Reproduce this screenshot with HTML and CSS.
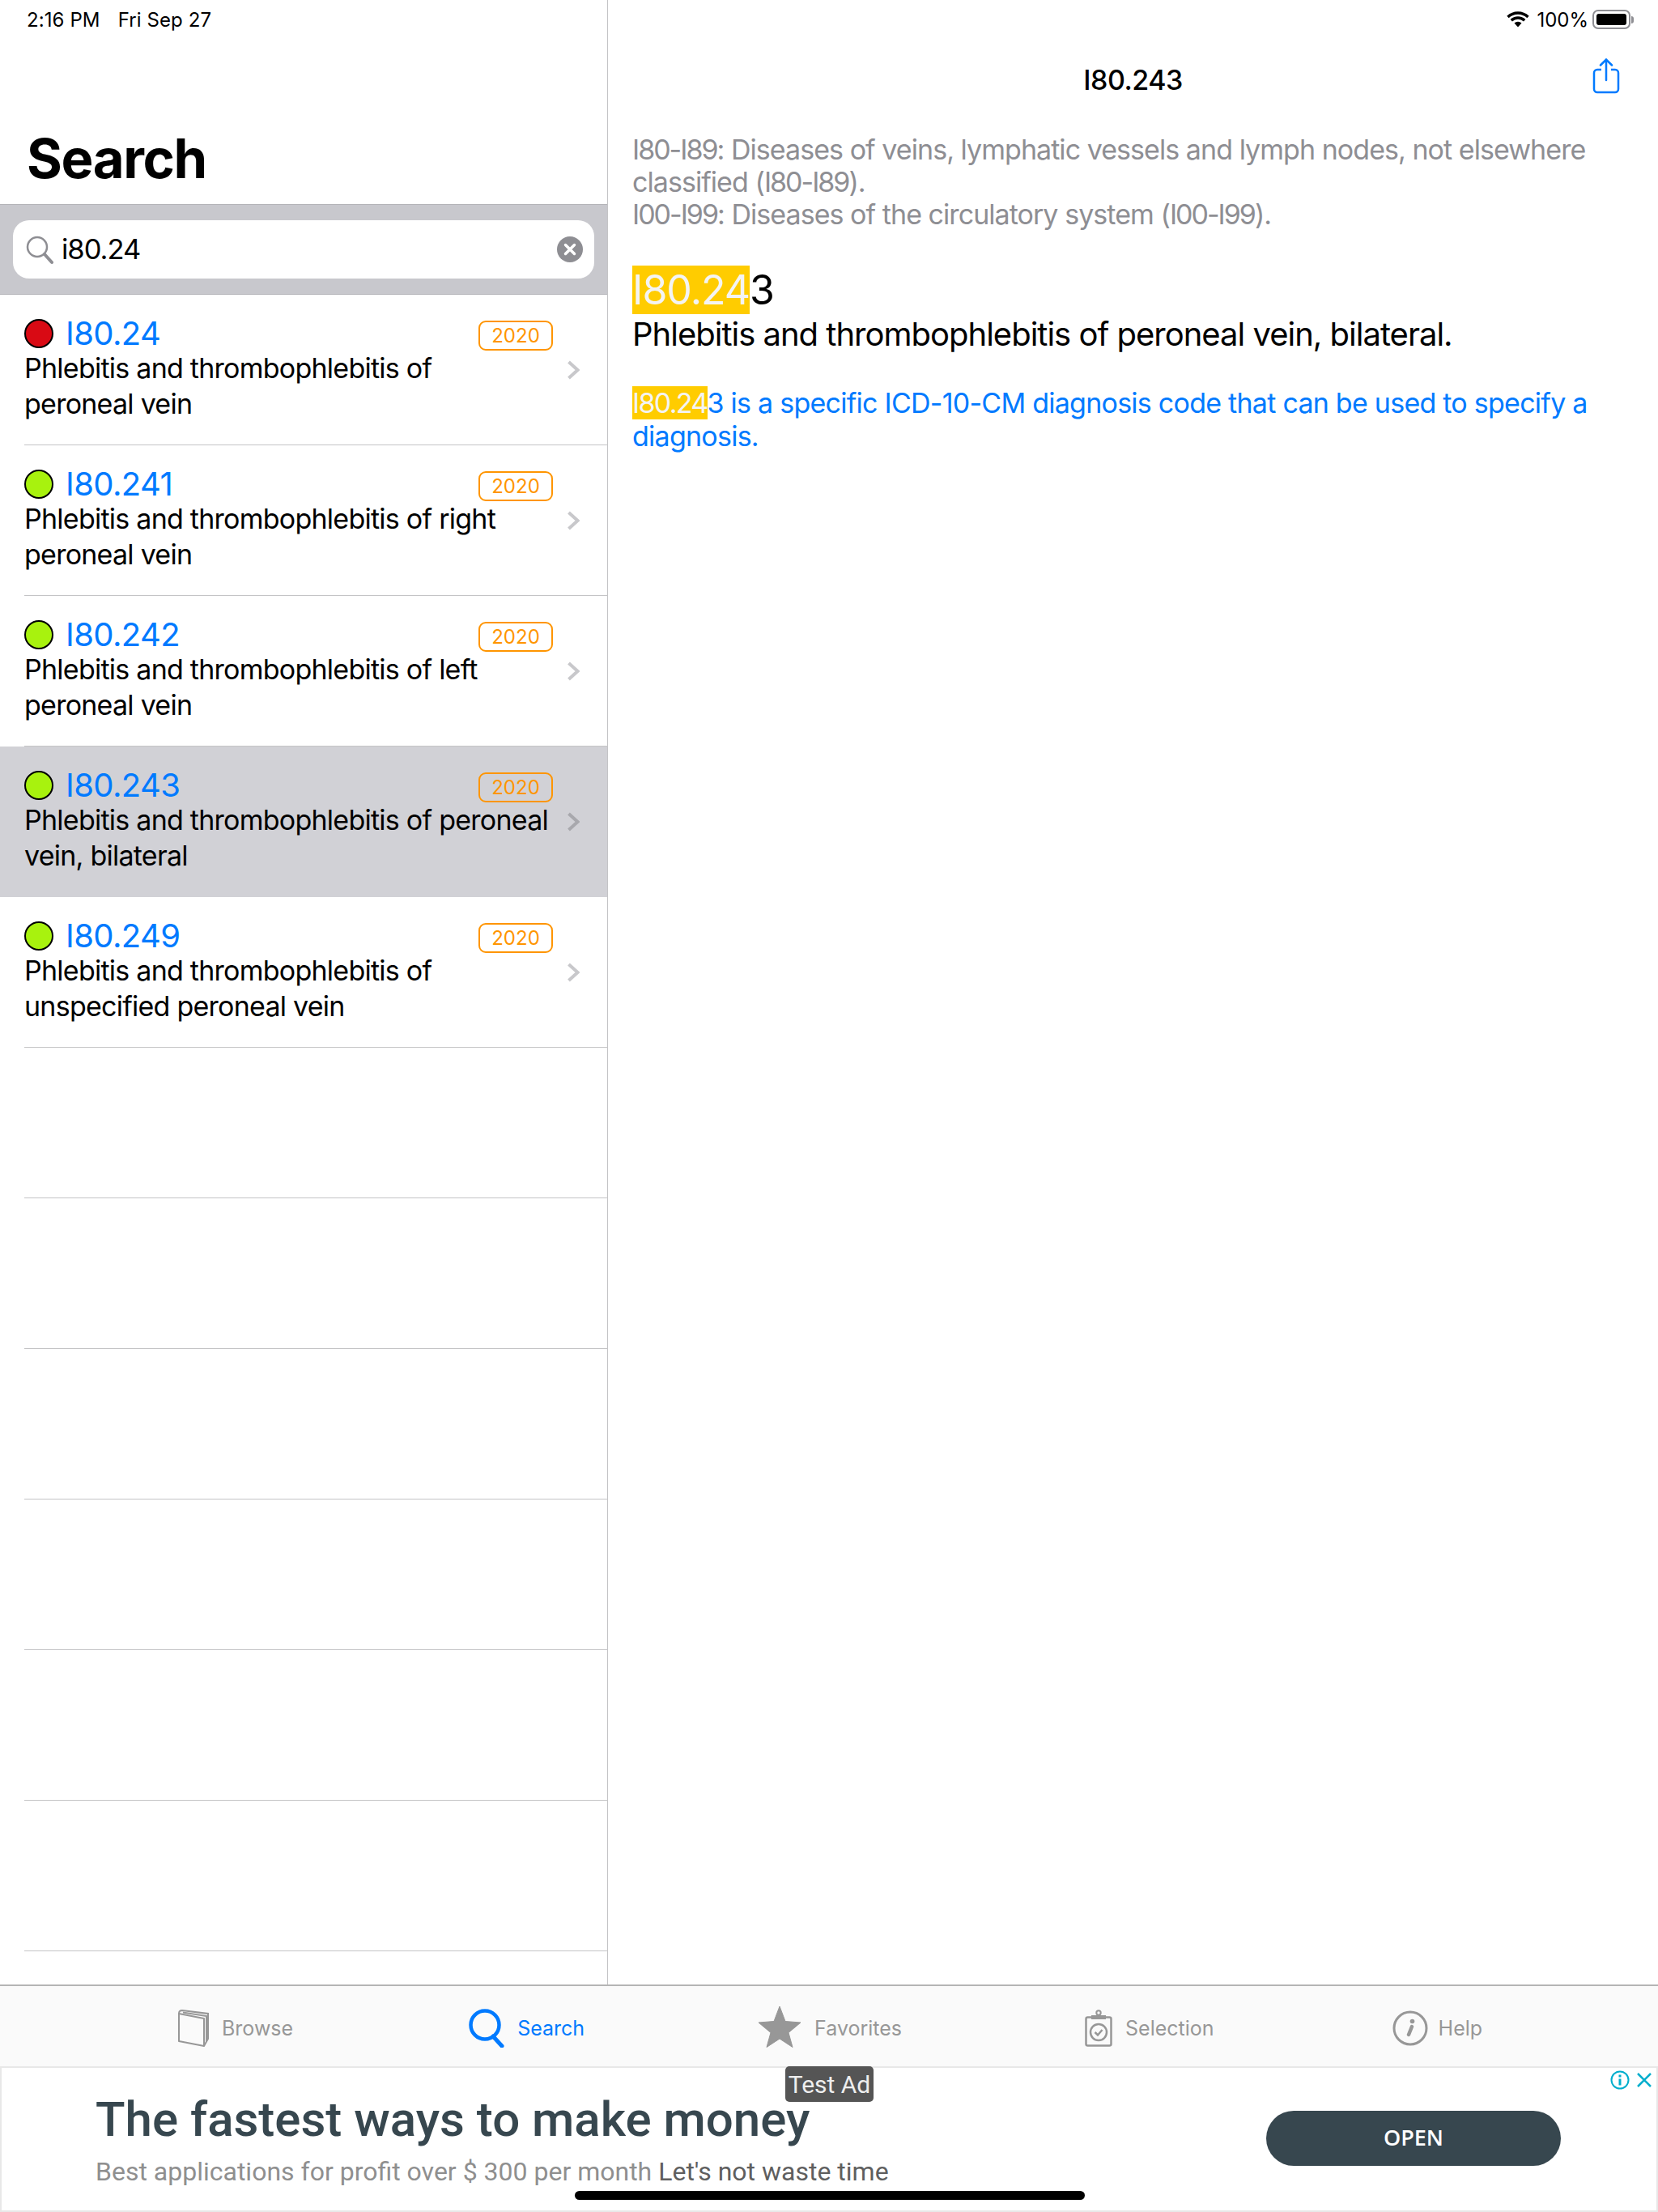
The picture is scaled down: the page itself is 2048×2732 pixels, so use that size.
FILE: index.html
```html
<!DOCTYPE html>
<html lang="en">
<head>
    <meta charset="UTF-8">
    <title>Search</title>
    <link rel="stylesheet" href="styles.css">
</head>
<body>
    <div class="app">
        <div class="split">
            <div class="master">
                <div class="status-left"><span>2:16 PM</span><span>Fri Sep 27</span></div>
                <h1 class="large-title">Search</h1>
                <div class="search-bar">
                    <div class="search-field">
                        <svg class="search-glass" width="34" height="36" viewBox="0 0 34 36"><circle cx="14" cy="14" r="12" fill="none" stroke="#8e8e93" stroke-width="2.5"/><path d="M23 23l9 10" stroke="#8e8e93" stroke-width="4" stroke-linecap="round"/></svg>
                        <span class="search-text">i80.24</span>
                        <svg class="search-clear" width="32" height="32" viewBox="0 0 32 32"><circle cx="16" cy="16" r="16" fill="#8e8e93"/><path d="M10.500 10.500l11 11M21.500 10.500l-11 11" stroke="#fff" stroke-width="3.500" stroke-linecap="round"/></svg>
                    </div>
                </div>

                <div class="row">
                    <div class="row-body">
                        <div class="row-head">
                            <span class="dot red"></span>
                            <span class="code">I80.24</span>
                            <span class="year">2020</span>
                        </div>
                        <div class="desc">Phlebitis and thrombophlebitis of<br>peroneal vein</div>
                    </div>
                    <svg class="chevron" width="16" height="24" viewBox="0 0 16 24"><path d="M2.500 2l11 10-11 10" fill="none" stroke="#c8c8cb" stroke-width="4"/></svg>
                </div>
                <div class="row">
                    <div class="row-body">
                        <div class="row-head">
                            <span class="dot green"></span>
                            <span class="code">I80.241</span>
                            <span class="year">2020</span>
                        </div>
                        <div class="desc">Phlebitis and thrombophlebitis of right<br>peroneal vein</div>
                    </div>
                    <svg class="chevron" width="16" height="24" viewBox="0 0 16 24"><path d="M2.500 2l11 10-11 10" fill="none" stroke="#c8c8cb" stroke-width="4"/></svg>
                </div>
                <div class="row">
                    <div class="row-body">
                        <div class="row-head">
                            <span class="dot green"></span>
                            <span class="code">I80.242</span>
                            <span class="year">2020</span>
                        </div>
                        <div class="desc">Phlebitis and thrombophlebitis of left<br>peroneal vein</div>
                    </div>
                    <svg class="chevron" width="16" height="24" viewBox="0 0 16 24"><path d="M2.500 2l11 10-11 10" fill="none" stroke="#c8c8cb" stroke-width="4"/></svg>
                </div>
                <div class="row selected">
                    <div class="row-body">
                        <div class="row-head">
                            <span class="dot green"></span>
                            <span class="code">I80.243</span>
                            <span class="year">2020</span>
                        </div>
                        <div class="desc">Phlebitis and thrombophlebitis of peroneal<br>vein, bilateral</div>
                    </div>
                    <svg class="chevron" width="16" height="24" viewBox="0 0 16 24"><path d="M2.500 2l11 10-11 10" fill="none" stroke="#a8a8ad" stroke-width="4"/></svg>
                </div>
                <div class="row">
                    <div class="row-body">
                        <div class="row-head">
                            <span class="dot green"></span>
                            <span class="code">I80.249</span>
                            <span class="year">2020</span>
                        </div>
                        <div class="desc">Phlebitis and thrombophlebitis of<br>unspecified peroneal vein</div>
                    </div>
                    <svg class="chevron" width="16" height="24" viewBox="0 0 16 24"><path d="M2.500 2l11 10-11 10" fill="none" stroke="#c8c8cb" stroke-width="4"/></svg>
                </div>
                <div class="row empty"></div>
                <div class="row empty"></div>
                <div class="row empty"></div>
                <div class="row empty"></div>
                <div class="row empty"></div>
                <div class="row empty"></div>
            </div>

            <div class="detail">
                <div class="status-right">
                    <svg width="28" height="22" viewBox="0 0 28 22"><path d="M1.500 8a18 18 0 0 1 25 0M5.800 12.200a12 12 0 0 1 16.400 0" fill="none" stroke="#000" stroke-width="3.400"/><path d="M9.500 15.500a7 7 0 0 1 9 0L14 20.500z" fill="#000"/></svg>
                    <span class="battery-label">100%</span>
                    <span class="battery"><span class="battery-fill"></span></span>
                    <span class="battery-cap"></span>
                </div>
                <div class="nav-bar">
                    <span class="nav-title">I80.243</span>
                    <svg class="share" width="34" height="44" viewBox="0 0 34 44"><path d="M11 14H6a4 4 0 0 0-4 4v20a4 4 0 0 0 4 4h22a4 4 0 0 0 4-4V18a4 4 0 0 0-4-4h-5" fill="none" stroke="#007aff" stroke-width="2.500"/><path d="M17 27V2M10 8.500L17 1.500l7 7" fill="none" stroke="#007aff" stroke-width="2.500" stroke-linecap="round"/></svg>
                </div>
                <div class="content">
                    <p class="crumbs"><span class="ref">I80-I89</span>: Diseases of veins, lymphatic vessels and lymph nodes, not elsewhere classified (<span class="ref">I80-I89</span>).<br><span class="ref">I00-I99</span>: Diseases of the circulatory system (<span class="ref">I00-I99</span>).</p>
                    <div class="code-title"><span class="hit">I80.24</span>3</div>
                    <div class="code-name">Phlebitis and thrombophlebitis of peroneal vein, bilateral.</div>
                    <p class="code-note"><span class="hit">I80.24</span>3 is a specific ICD-10-CM diagnosis code that can be used to specify a diagnosis.</p>
                </div>
            </div>
        </div>

        <div class="tabbar">
            <div class="tab">
                <svg width="38" height="46" viewBox="0 0 38 46"><path d="M1 5l31 6v34L1 39z" fill="none" stroke="#979797" stroke-width="2" stroke-linejoin="round"/><path d="M1 5q0-4 4-4l32 4v31l-5 9" fill="none" stroke="#979797" stroke-width="2"/><path d="M6 3.500l29 4.500v31" fill="none" stroke="#979797" stroke-width="2"/></svg>
                <span>Browse</span>
            </div>
            <div class="tab active">
                <svg width="46" height="48" viewBox="0 0 46 48"><circle cx="20" cy="20" r="17.500" fill="none" stroke="#007aff" stroke-width="4.500"/><path d="M30 34l11 12" stroke="#007aff" stroke-width="5" stroke-linecap="round"/></svg>
                <span>Search</span>
            </div>
            <div class="tab tab-fav">
                <svg class="star" width="54" height="52" viewBox="0 0 54 52"><path d="M27 1l7 18.500 19 1.500-15 12.500 5 18L27 41 11 51.500l5-18L1 21l19-1.500z" fill="#979797" stroke="#979797" stroke-linejoin="round"/></svg>
                <span>Favorites</span>
            </div>
            <div class="tab tab-sel">
                <svg width="34" height="46" viewBox="0 0 34 46"><rect x="1.500" y="9.500" width="31" height="35" rx="2" fill="none" stroke="#979797" stroke-width="2.500"/><path d="M8 7h18v5H8z" fill="#979797"/><circle cx="17" cy="4" r="2.700" fill="none" stroke="#979797" stroke-width="2"/><circle cx="17" cy="28" r="10" fill="none" stroke="#979797" stroke-width="2.500"/><path d="M12.500 28l3.500 3.500 5.500-6.500" fill="none" stroke="#979797" stroke-width="2.500"/></svg>
                <span>Selection</span>
            </div>
            <div class="tab tab-help">
                <svg width="44" height="44" viewBox="0 0 44 44"><circle cx="22" cy="22" r="20" fill="none" stroke="#979797" stroke-width="3"/><path d="M24 20l-4 10" stroke="#979797" stroke-width="4.500" stroke-linecap="round"/><circle cx="24.500" cy="13.500" r="2.800" fill="#979797"/></svg>
                <span>Help</span>
            </div>
        </div>

        <div class="ad">
            <span class="ad-tag">Test Ad</span>
            <div class="ad-marks">
                <svg width="24" height="24" viewBox="0 0 24 24"><circle cx="12" cy="12" r="10.500" fill="none" stroke="#00aecd" stroke-width="2"/><path d="M12 10.500v8M12 5.500v3" stroke="#00aecd" stroke-width="3"/></svg>
                <svg width="18" height="18" viewBox="0 0 18 18"><path d="M1 1l16 16M17 1L1 17" stroke="#00aecd" stroke-width="2.500"/></svg>
            </div>
            <div class="ad-copy">
                <div class="ad-title">The fastest ways to make money</div>
                <div class="ad-sub">Best applications for profit over $ 300 per month <span class="ad-sub-dark">Let's not waste time</span></div>
            </div>
            <div class="ad-open">OPEN</div>
            <span class="home-bar"></span>
        </div>
    </div>
</body>
</html>
```

FILE: styles.css
```css
* {
    box-sizing: border-box;
}
body {
    margin: 0;
    background: white;
    font-family: 'Inter', 'Liberation Sans', sans-serif;
    color: black;
}
p {
    margin: 0;
}
.app {
    width: 2048px;
    height: 2732px;
    display: flex;
    flex-direction: column;
    overflow: hidden;
}
.split {
    height: 2451px;
    display: flex;
}

/* left column */
.master {
    width: 751px;
    border-right: 1px solid #c4c4c6;
    overflow: hidden;
}
.status-left {
    height: 48px;
    padding-left: 33px;
    display: flex;
    align-items: center;
    gap: 22px;
    font-size: 24px;
    letter-spacing: 0.1px;
}
.large-title {
    margin: 0;
    height: 204px;
    padding: 112px 0 0 33px;
    font-size: 67px;
    line-height: 72px;
    font-weight: 700;
    letter-spacing: -1.4px;
}
.search-bar {
    height: 112px;
    padding: 19px 16px;
    background: #c8c8cd;
    border-top: 1px solid #b4b4b8;
    border-bottom: 1px solid #b4b4b8;
}
.search-field {
    height: 72px;
    background: white;
    border-radius: 20px;
    padding: 0 14px 0 16px;
    display: flex;
    align-items: center;
}
.search-glass {
    margin-top: 2px;
}
.search-text {
    margin-left: 10px;
    margin-top: -2px;
    font-size: 34.500px;
    letter-spacing: -1px;
}
.search-clear {
    margin-left: auto;
}

/* list rows */
.row {
    height: 186px;
    padding: 30px 34px 0 30px;
    display: flex;
    position: relative;
}
.row::after {
    content: "";
    position: absolute;
    left: 30px;
    right: 0;
    bottom: 0;
    height: 1px;
    background: #c4c4c6;
}
.row.selected {
    background: #d1d1d6;
}
.row.selected::after {
    display: none;
}
.row-body {
    flex: 1;
    min-width: 0;
}
.row-head {
    height: 36px;
    display: flex;
    align-items: center;
}
.dot {
    width: 36px;
    height: 36px;
    border-radius: 50%;
    border: 2px solid black;
}
.dot.red {
    background: #d90a14;
}
.dot.green {
    background: #a8f20e;
}
.code {
    margin-left: 15px;
    font-size: 40px;
    line-height: 36px;
    color: #007aff;
    letter-spacing: -0.6px;
}
.year {
    margin-left: auto;
    margin-right: 17px;
    margin-top: 5px;
    width: 92px;
    height: 37px;
    border: 2px solid #ff9500;
    border-radius: 9px;
    color: #ff9500;
    font-size: 24px;
    line-height: 33px;
    text-align: center;
}
.desc {
    margin-top: 3px;
    font-size: 34px;
    line-height: 44px;
    letter-spacing: -0.75px;
    white-space: nowrap;
}
.chevron {
    margin-top: 51px;
}

/* right column */
.detail {
    flex: 1;
    min-width: 0;
}
.status-right {
    height: 48px;
    padding-right: 30px;
    display: flex;
    align-items: center;
    justify-content: flex-end;
}
.battery-label {
    margin-left: 9px;
    font-size: 24px;
}
.battery {
    margin-left: 5px;
    width: 47px;
    height: 24px;
    padding: 3px;
    border: 2px solid #8e8e93;
    border-radius: 7px;
    display: flex;
}
.battery-fill {
    flex: 1;
    background: black;
    border-radius: 3px;
}
.battery-cap {
    width: 3px;
    height: 9px;
    margin-left: 1px;
    background: #8e8e93;
    border-radius: 0 3px 3px 0;
}
.nav-bar {
    height: 100px;
    position: relative;
    display: flex;
    align-items: center;
    justify-content: center;
}
.nav-title {
    font-size: 34px;
    font-weight: 500;
    letter-spacing: -0.5px;
}
.share {
    position: absolute;
    right: 47px;
    top: 24px;
}
.content {
    padding: 17px 30px 0 30px;
}
.crumbs {
    font-size: 34px;
    line-height: 40px;
    letter-spacing: -0.95px;
    color: #8e8e93;
}
.ref {
    letter-spacing: -2px;
}
.code-title {
    margin-top: 42px;
    font-size: 50px;
    line-height: 63px;
    letter-spacing: -1px;
}
.hit {
    background: #ffcc00;
    color: #f4f4f4;
}
.code-name {
    margin-top: -2px;
    font-size: 40px;
    line-height: 50px;
    letter-spacing: -1px;
}
.code-note {
    margin-top: 39px;
    font-size: 34px;
    line-height: 41px;
    letter-spacing: -0.75px;
    color: #007aff;
}
.code-note .hit {
    letter-spacing: -1.7px;
}

/* tab bar */
.tabbar {
    height: 101px;
    background: #fafafa;
    border-top: 2px solid #b5b5b5;
    padding: 4px 0 0 220px;
    display: flex;
    align-items: center;
    gap: 217px;
}
.tab {
    display: flex;
    align-items: center;
    gap: 16px;
    font-size: 25px;
    color: #979797;
}
.tab.active {
    gap: 14px;
    color: #007aff;
}
.tab-fav {
    margin-left: -3px;
}
.tab-sel {
    margin-left: 9px;
}
.tab-help {
    margin-left: 3px;
    gap: 13px;
}
.star {
    margin-top: -4px;
}

/* ad banner */
.ad {
    height: 180px;
    padding: 0 118px 0 116px;
    border: 2px solid #e8e8e8;
    position: relative;
    display: flex;
    align-items: center;
    justify-content: space-between;
}
.ad-tag {
    position: absolute;
    left: 968px;
    top: -2px;
    width: 109px;
    height: 44px;
    background: #555;
    color: #eee;
    border-radius: 5px;
    font-size: 30px;
    line-height: 45px;
    text-align: center;
    font-family: 'Roboto', sans-serif;
}
.ad-marks {
    position: absolute;
    right: 6px;
    top: 3px;
    display: flex;
    align-items: center;
    gap: 9px;
}
.ad-copy {
    align-self: flex-start;
    font-family: 'Roboto', sans-serif;
}
.ad-title {
    margin-top: 29px;
    font-size: 60px;
    line-height: 70px;
    font-weight: 500;
    color: #37474f;
}
.ad-sub {
    margin-top: 9px;
    font-size: 32px;
    line-height: 40px;
    color: #8f8f8f;
}
.ad-sub-dark {
    color: #5f5f5f;
}
.ad-open {
    width: 364px;
    height: 68px;
    margin-top: -2px;
    border-radius: 34px;
    background: #37474f;
    color: white;
    font-family: 'Open Sans', sans-serif;
    font-size: 27px;
    font-weight: 600;
    line-height: 66px;
    text-align: center;
}
.home-bar {
    position: absolute;
    left: 708px;
    bottom: 13px;
    width: 630px;
    height: 11px;
    background: black;
    border-radius: 6px;
}
```
